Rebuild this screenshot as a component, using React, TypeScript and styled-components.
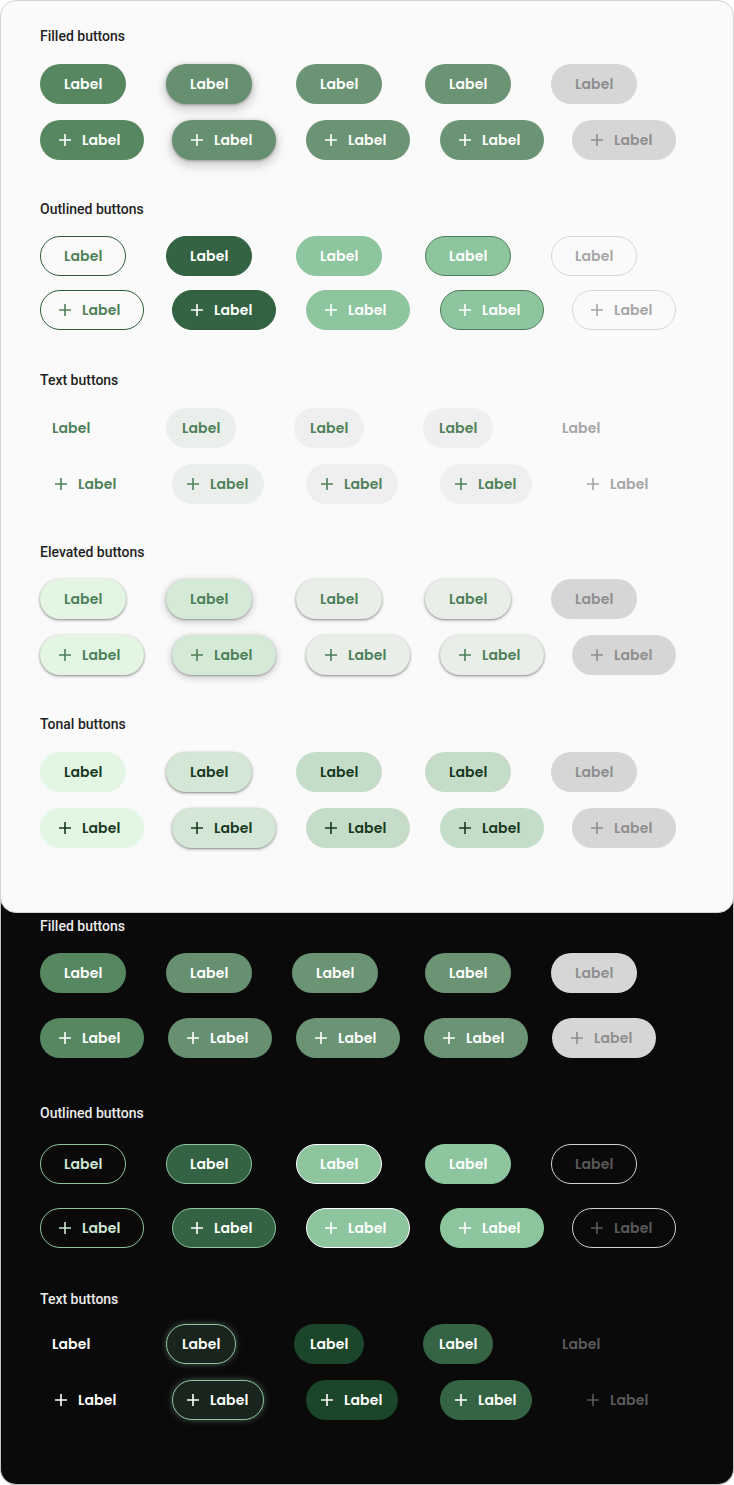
import React from "react";
import styled, { createGlobalStyle, css } from "styled-components";

const Global = createGlobalStyle`
  html, body { margin: 0; padding: 0; background: #ffffff; }
  body { font-family: Roboto, "Liberation Sans", sans-serif; }
  * { box-sizing: border-box; }
`;

type Mode = "light" | "dark";
type Variant = "filled" | "outlined" | "text" | "elevated" | "tonal";
type State = "enabled" | "hovered" | "focused" | "pressed" | "disabled";

interface Look {
  bg: string;
  fg: string;
  border?: string;
  shadow?: string;
}

const E1 = "0 1px 2px rgba(0,0,0,0.3), 0 1px 3px 1px rgba(0,0,0,0.15)";
const E2 = "0 1px 2px rgba(0,0,0,0.3), 0 2px 6px 2px rgba(0,0,0,0.15)";
const E3 = "0 1px 3px rgba(0,0,0,0.3), 0 4px 8px 3px rgba(0,0,0,0.15)";

const DIS_BG = "#d6d6d6";
const DIS_FG = "#8e8e8e";

const looks: Record<string, Look> = {
  "light-filled-enabled": { bg: "#568760", fg: "#ffffff" },
  "light-filled-hovered": { bg: "#66906f", fg: "#ffffff", shadow: E3 },
  "light-filled-focused": { bg: "#6a9473", fg: "#ffffff" },
  "light-filled-pressed": { bg: "#6a9473", fg: "#ffffff" },
  "light-filled-disabled": { bg: DIS_BG, fg: DIS_FG },

  "light-outlined-enabled": { bg: "transparent", fg: "#4f8159", border: "#2f5e3c" },
  "light-outlined-hovered": { bg: "#336343", fg: "#ffffff", border: "#2f5e3c" },
  "light-outlined-focused": { bg: "#8dc59f", fg: "#ffffff", border: "#8dc59f" },
  "light-outlined-pressed": { bg: "#8dc59f", fg: "#ffffff", border: "#4f7f5a" },
  "light-outlined-disabled": { bg: "transparent", fg: "#a6a6a6", border: "#d6d6d6" },

  "light-text-enabled": { bg: "transparent", fg: "#4f8159" },
  "light-text-hovered": { bg: "#ebefeb", fg: "#4f8159" },
  "light-text-focused": { bg: "#efefef", fg: "#4f8159" },
  "light-text-pressed": { bg: "#efefef", fg: "#4f8159" },
  "light-text-disabled": { bg: "transparent", fg: "#a6a6a6" },

  "light-elevated-enabled": { bg: "#e3f6e4", fg: "#4c7f58", shadow: E1 },
  "light-elevated-hovered": { bg: "#d5e9d7", fg: "#4c7f58", shadow: E2 },
  "light-elevated-focused": { bg: "#e9eee9", fg: "#4c7f58", shadow: E1 },
  "light-elevated-pressed": { bg: "#e9eee9", fg: "#4c7f58", shadow: E1 },
  "light-elevated-disabled": { bg: DIS_BG, fg: DIS_FG },

  "light-tonal-enabled": { bg: "#e3f6e4", fg: "#17391f" },
  "light-tonal-hovered": { bg: "#d4e6d6", fg: "#17391f", shadow: E1 },
  "light-tonal-focused": { bg: "#c5ddc8", fg: "#17391f" },
  "light-tonal-pressed": { bg: "#c5ddc8", fg: "#17391f" },
  "light-tonal-disabled": { bg: DIS_BG, fg: DIS_FG },

  "dark-filled-enabled": { bg: "#568760", fg: "#ffffff" },
  "dark-filled-hovered": { bg: "#66906f", fg: "#ffffff" },
  "dark-filled-focused": { bg: "#6a9473", fg: "#ffffff" },
  "dark-filled-pressed": { bg: "#6a9473", fg: "#ffffff" },
  "dark-filled-disabled": { bg: DIS_BG, fg: DIS_FG },

  "dark-outlined-enabled": { bg: "transparent", fg: "#cfe7d3", border: "#8dc59f" },
  "dark-outlined-hovered": { bg: "#336343", fg: "#ffffff", border: "#8dc59f" },
  "dark-outlined-focused": { bg: "#8dc59f", fg: "#ffffff", border: "#ffffff" },
  "dark-outlined-pressed": { bg: "#8dc59f", fg: "#ffffff", border: "#8dc59f" },
  "dark-outlined-disabled": { bg: "transparent", fg: "#5a5a5a", border: "#d0d0d0" },

  "dark-text-enabled": { bg: "transparent", fg: "#ffffff" },
  "dark-text-hovered": {
    bg: "#18241c",
    fg: "#ffffff",
    border: "#8dc59f",
    shadow: "0 0 6px rgba(141,197,159,0.45)",
  },
  "dark-text-focused": { bg: "#1c462a", fg: "#ffffff" },
  "dark-text-pressed": { bg: "#356444", fg: "#ffffff" },
  "dark-text-disabled": { bg: "transparent", fg: "#5a5a5a" },
};

const Page = styled.div`
  width: 734px;
  display: flex;
  flex-direction: column;
`;

const Card = styled.div<{ $mode: Mode }>`
  display: flex;
  flex-direction: column;
  ${(p) =>
    p.$mode === "light"
      ? css`
          position: relative;
          z-index: 1;
          background: #fafafa;
          border: 1px solid #d3d3d3;
          border-radius: 16px;
          padding: 27px 0 64px 39px;
        `
      : css`
          margin-top: -16px;
          background: #0a0a0a;
          border: 1px solid #c4c4c4;
          border-top: none;
          border-radius: 0 0 16px 16px;
          padding: 21px 0 64px 39px;
        `}
`;

const Section = styled.section<{ $top: number; $titleGap: number; $rowGap: number }>`
  display: flex;
  flex-direction: column;
  margin-top: ${(p) => p.$top}px;
  & > h2 {
    margin: 0 0 ${(p) => p.$titleGap}px 0;
  }
  & > div + div {
    margin-top: ${(p) => p.$rowGap}px;
  }
`;

const Title = styled.h2<{ $mode: Mode }>`
  font-family: Roboto, "Liberation Sans", sans-serif;
  font-size: 14px;
  line-height: 16px;
  font-weight: 500;
  color: ${(p) => (p.$mode === "light" ? "#1f1f1f" : "#ececec")};
`;

const Row = styled.div<{ $cols: string }>`
  display: grid;
  grid-template-columns: ${(p) => p.$cols};
  align-items: center;
  justify-items: start;
`;

const Btn = styled.button<{ $look: Look; $pad: string }>`
  height: 40px;
  border-radius: 20px;
  display: inline-flex;
  align-items: center;
  gap: 8px;
  padding: ${(p) => p.$pad};
  border: 1px solid ${(p) => p.$look.border ?? "transparent"};
  background: ${(p) => p.$look.bg};
  color: ${(p) => p.$look.fg};
  box-shadow: ${(p) => p.$look.shadow ?? "none"};
  font-family: Poppins, Inter, "Open Sans", sans-serif;
  font-size: 14px;
  font-weight: 600;
  letter-spacing: 0.1px;
  line-height: 20px;
  white-space: nowrap;
  cursor: pointer;
  & svg {
    flex: none;
  }
`;

const Plus = () => (
  <svg width="18" height="18" viewBox="0 0 18 18" aria-hidden="true">
    <path d="M9 3v12M3 9h12" stroke="currentColor" strokeWidth="1.6" fill="none" />
  </svg>
);

const STATES: State[] = ["enabled", "hovered", "focused", "pressed", "disabled"];

const colsFrom = (lefts: number[]) =>
  lefts
    .slice(1)
    .map((l, i) => `${l - lefts[i]}px`)
    .join(" ") + " auto";

const ROW_A = colsFrom([40, 166, 296, 425, 551]);
const ROW_B = colsFrom([40, 172, 306, 440, 572]);
const ROW_TEXT = colsFrom([40, 166, 294, 423, 550]);
const ROW_DARK_A = colsFrom([40, 166, 292, 425, 551]);
const ROW_DARK_B = colsFrom([40, 168, 296, 424, 552]);

function padFor(variant: Variant, state: State, icon: boolean) {
  if (variant === "text") {
    if (icon) return "0 15px 0 11px";
    return state === "enabled" || state === "disabled" ? "0 11px" : "0 15px";
  }
  return icon ? "0 23px 0 15px" : "0 23px";
}

const ButtonRow: React.FC<{ mode: Mode; variant: Variant; icon: boolean; cols: string }> = ({
  mode,
  variant,
  icon,
  cols,
}) => (
  <Row $cols={cols}>
    {STATES.map((s) => (
      <Btn
        key={s}
        $look={looks[`${mode}-${variant}-${s}`]}
        $pad={padFor(variant, s, icon)}
        disabled={s === "disabled"}
      >
        {icon && <Plus />}
        Label
      </Btn>
    ))}
  </Row>
);

interface SectionDef {
  title: string;
  variant: Variant;
  top: number;
  titleGap: number;
  rowGap: number;
  colsA: string;
  colsB: string;
}

const lightSections: SectionDef[] = [
  { title: "Filled buttons", variant: "filled", top: 0, titleGap: 20, rowGap: 16, colsA: ROW_A, colsB: ROW_B },
  { title: "Outlined buttons", variant: "outlined", top: 41, titleGap: 19, rowGap: 14, colsA: ROW_A, colsB: ROW_B },
  { title: "Text buttons", variant: "text", top: 42, titleGap: 20, rowGap: 16, colsA: ROW_TEXT, colsB: ROW_B },
  { title: "Elevated buttons", variant: "elevated", top: 40, titleGap: 19, rowGap: 16, colsA: ROW_A, colsB: ROW_B },
  { title: "Tonal buttons", variant: "tonal", top: 41, titleGap: 20, rowGap: 16, colsA: ROW_A, colsB: ROW_B },
];

const darkSections: SectionDef[] = [
  { title: "Filled buttons", variant: "filled", top: 0, titleGap: 19, rowGap: 25, colsA: ROW_DARK_A, colsB: ROW_DARK_B },
  { title: "Outlined buttons", variant: "outlined", top: 47, titleGap: 23, rowGap: 24, colsA: ROW_A, colsB: ROW_B },
  { title: "Text buttons", variant: "text", top: 43, titleGap: 17, rowGap: 16, colsA: ROW_TEXT, colsB: ROW_B },
];

const Panel: React.FC<{ mode: Mode; sections: SectionDef[] }> = ({ mode, sections }) => (
  <Card $mode={mode}>
    {sections.map((s) => (
      <Section key={s.title} $top={s.top} $titleGap={s.titleGap} $rowGap={s.rowGap}>
        <Title $mode={mode}>{s.title}</Title>
        <ButtonRow mode={mode} variant={s.variant} icon={false} cols={s.colsA} />
        <ButtonRow mode={mode} variant={s.variant} icon={true} cols={s.colsB} />
      </Section>
    ))}
  </Card>
);

export default function App() {
  return (
    <>
      <Global />
      <Page>
        <Panel mode="light" sections={lightSections} />
        <Panel mode="dark" sections={darkSections} />
      </Page>
    </>
  );
}
